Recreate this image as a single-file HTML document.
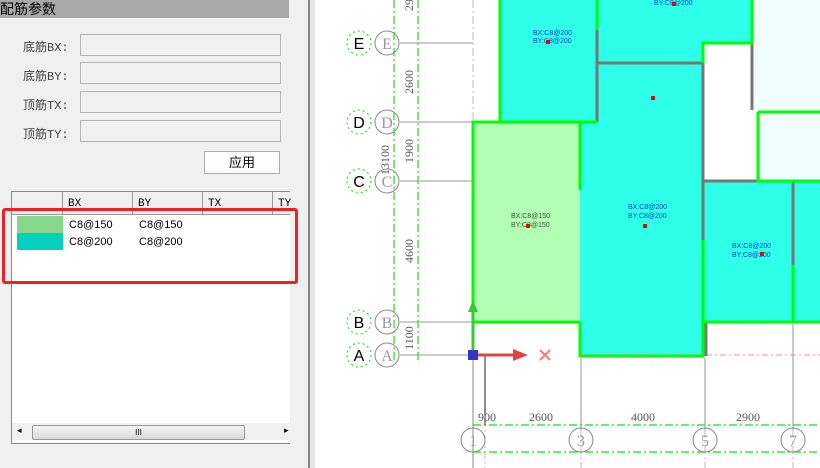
<!DOCTYPE html>
<html><head><meta charset="utf-8"><style>
body{margin:0;width:820px;height:468px;overflow:hidden;background:#fff;position:relative;font-family:"Liberation Sans","Noto Sans CJK SC",sans-serif}
#left{position:absolute;left:0;top:0;width:308px;height:468px;background:#f0f0f0}
#hdr{position:absolute;left:0;top:0;width:289px;height:18px;background:#a9a9a9;font-size:14px;line-height:18px;color:#000}
.lbl{position:absolute;left:23px;font-size:12px;color:#444;font-family:"Liberation Mono","Noto Sans CJK SC",monospace}
.inp{position:absolute;left:80px;width:199px;height:20px;border:1px solid #b4b4b4;background:#f0f0f0}
#btn{position:absolute;left:204px;top:151px;width:74px;height:21px;border:1px solid #adadad;background:#fdfdfd;font-size:13px;text-align:center;line-height:21px}
#grid{position:absolute;left:11px;top:191px;width:278px;height:251px;border-left:1px solid #888;border-top:1px solid #888;background:#fff;border-bottom:1px solid #888}
.th{position:absolute;top:0;height:23px;background:#f0f0f0;border-right:1px solid #999;border-bottom:1px solid #999;font-size:11px;font-family:"Liberation Mono",monospace;padding-left:5px;line-height:24px;box-sizing:border-box}
.cell{position:absolute;font-size:11px;color:#000}
</style></head><body>
<div id="left">
<div id="hdr">配筋参数</div>
<div class="lbl" style="top:38px">底筋BX:</div><div class="inp" style="top:34px"></div>
<div class="lbl" style="top:67px">底筋BY:</div><div class="inp" style="top:62px"></div>
<div class="lbl" style="top:96px">顶筋TX:</div><div class="inp" style="top:91px"></div>
<div class="lbl" style="top:125px">顶筋TY:</div><div class="inp" style="top:120px"></div>
<div id="btn">应用</div>
<div id="grid">
<div class="th" style="left:0;width:51px"></div>
<div class="th" style="left:51px;width:70px">BX</div>
<div class="th" style="left:121px;width:70px">BY</div>
<div class="th" style="left:191px;width:70px">TX</div>
<div class="th" style="left:261px;width:17px;border-right:none">TY</div>
<div style="position:absolute;left:5px;top:24px;width:46px;height:17px;background:#87d88b"></div>
<div style="position:absolute;left:5px;top:41px;width:46px;height:17px;background:#00d2be"></div>
<div class="cell" style="left:57px;top:27px">C8@150</div><div class="cell" style="left:127px;top:27px">C8@150</div>
<div class="cell" style="left:57px;top:44px">C8@200</div><div class="cell" style="left:127px;top:44px">C8@200</div>
<div style="position:absolute;left:0;top:231px;width:278px;height:17px;background:#f0f0f0"></div>
<div style="position:absolute;left:20px;top:233px;width:211px;height:13px;background:linear-gradient(#f4f4f4,#d8d8d8);border:1px solid #999;border-radius:2px;font-size:8px;text-align:center;line-height:13px">III</div>
<div style="position:absolute;left:5px;top:233px;font-size:9px">◂</div><div style="position:absolute;left:272px;top:233px;font-size:9px">▸</div>
</div>
<div style="position:absolute;left:2px;top:208px;width:290px;height:70px;border:3px solid #f02020;border-radius:3px"></div>
</div>
<div style="position:absolute;left:308px;top:0;width:2px;height:468px;background:#888"></div>
<div style="position:absolute;left:310px;top:0;width:5px;height:468px;background:#e6e6e6"></div>
<svg style="position:absolute;left:0;top:0" width="820" height="468" font-family="Liberation Serif,serif">
<rect x="500" y="0" width="97" height="122" fill="#2effe8"/>
<rect x="597" y="0" width="106" height="63" fill="#2effe8"/>
<rect x="703" y="0" width="49" height="43" fill="#2effe8"/>
<rect x="597" y="63" width="106" height="293" fill="#2effe8"/>
<rect x="580" y="122" width="123" height="234" fill="#2effe8"/>
<rect x="473" y="122" width="107" height="200" fill="#b3ffb3"/>
<rect x="703" y="181" width="117" height="141" fill="#2effe8"/>
<rect x="752" y="0" width="68" height="112" fill="#f0fffe"/>
<rect x="758" y="113" width="62" height="68" fill="#f0fffe"/>
<g stroke="#777" stroke-width="3" fill="none">
<path d="M597 30V122M597 63H703M703 63V240M703 181H758M793 181V265M752 43V110M706 322V356"/>
</g>
<g stroke="#00ff00" stroke-width="3" fill="none">
<path d="M500 0V122H597M597 0V30M752 0V43H703V63M473 322V122H580V190M473 322H580M580 322V356H703V322H820M703 322V240M758 112H820M758 112V181H820M793 265V322"/>
</g>
<g stroke="#999" stroke-width="1">
<path d="M400 43H473M400 122H473M400 181H473M400 322H473M400 355H473M473 355V420M581 358V430M705 358V430M793 322V430"/>
</g>
<g stroke="#00ee00" stroke-width="1.2" stroke-dasharray="8,3,2,3" fill="none">
<path d="M394 0V360M418 0V360M473 425H820M473 452H820"/>
</g>
<path d="M473 0V122M485 355V468M581 430V468M705 430V468M793 430V468" stroke="#bbb" stroke-dasharray="8,3,2,3"/>
<path d="M485 355V425" stroke="#222"/>
<path d="M473 355V468" stroke="#888"/>
<path d="M580 355H820" stroke="#f66" stroke-dasharray="6,3,2,3" stroke-width=".8"/>
<path d="M473 355V305" stroke="#3c3" stroke-width="3"/><path d="M468 312L473 300L478 312Z" fill="#3c3"/>
<path d="M473 355H515" stroke="#d44" stroke-width="3"/><path d="M513 349L528 355L513 361Z" fill="#d44"/>
<rect x="468" y="350" width="10" height="10" fill="#33c"/>
<path d="M540 350l10 10M550 350l-10 10" stroke="#f77" stroke-width="2"/>
<g font-size="16" text-anchor="middle">
<g fill="none" stroke="#00dd00" stroke-dasharray="2,3"><circle cx="359" cy="43" r="12"/><circle cx="359" cy="122" r="12"/><circle cx="359" cy="181" r="12"/><circle cx="359" cy="322" r="12"/><circle cx="359" cy="355" r="12"/></g>
<g fill="none" stroke="#888"><circle cx="387" cy="43" r="12"/><circle cx="387" cy="122" r="12"/><circle cx="387" cy="181" r="12"/><circle cx="387" cy="322" r="12"/><circle cx="387" cy="355" r="12"/>
<circle cx="473" cy="440" r="12"/><circle cx="581" cy="440" r="12"/><circle cx="705" cy="440" r="12"/><circle cx="793" cy="440" r="12"/></g>
<g font-family="Liberation Sans,sans-serif" fill="#000"><text x="359" y="49">E</text><text x="359" y="128">D</text><text x="359" y="187">C</text><text x="359" y="328">B</text><text x="359" y="361">A</text></g>
<g fill="#999"><text x="387" y="49">E</text><text x="387" y="128">D</text><text x="387" y="187">C</text><text x="387" y="328">B</text><text x="387" y="361">A</text>
<text x="473" y="446">1</text><text x="581" y="446">3</text><text x="705" y="446">5</text><text x="793" y="446">7</text></g>
</g>
<g font-size="12" fill="#555" text-anchor="middle">
<text x="487" y="421">900</text><text x="541" y="421">2600</text><text x="643" y="421">4000</text><text x="748" y="421">2900</text>
<text transform="translate(413,82) rotate(-90)">2600</text>
<text transform="translate(413,151) rotate(-90)">1900</text>
<text transform="translate(413,251) rotate(-90)">4600</text>
<text transform="translate(413,338) rotate(-90)">1100</text>
<text transform="translate(389,160) rotate(-90)">13100</text>
<text transform="translate(413,5) rotate(-90)">29</text>
</g>
<g font-size="7" font-family="Liberation Sans,sans-serif" fill="#1144cc">
<text x="533" y="35">BX:C8@200</text><text x="533" y="43">BY:C8@200</text>
<text x="654" y="5">BY:C8@200</text>
<text x="628" y="209">BX:C8@200</text><text x="628" y="218">BY:C8@200</text>
<text x="732" y="248">BX:C8@200</text><text x="732" y="257">BY:C8@200</text>
<text x="511" y="218" fill="#335533">BX:C8@150</text><text x="511" y="227" fill="#335533">BY:C8@150</text>
</g>
<g fill="#e00"><rect x="546" y="40" width="4" height="4"/><rect x="672" y="2" width="4" height="4"/><rect x="651" y="96" width="4" height="4"/><rect x="643" y="224" width="4" height="4"/><rect x="760" y="252" width="4" height="4"/><rect x="526" y="224" width="4" height="4"/></g>
</svg>
</body></html>
